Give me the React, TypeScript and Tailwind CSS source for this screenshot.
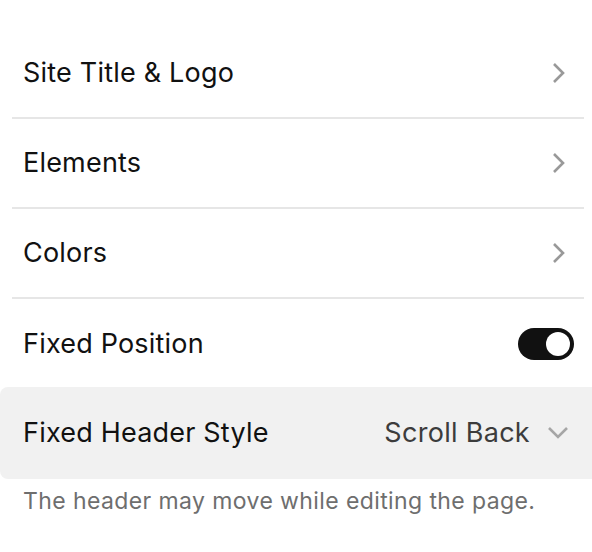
const LINKS = ['Site Title & Logo', 'Elements', 'Colors'];

function Chevron({ dir }: { dir: 'right' | 'down' }) {
  if (dir === 'right')
    return (
      <svg width="16" height="22" viewBox="0 0 16 22" className="mr-[7px] text-[#999]" fill="none" stroke="currentColor" strokeWidth="2.6">
        <path d="M3 2l9 9-9 9" />
      </svg>
    );
  return (
    <svg width="22" height="16" viewBox="0 0 22 16" className="text-[#a6a6a6]" fill="none" stroke="currentColor" strokeWidth="2.6">
      <path d="M2 3l9 9 9-9" />
    </svg>
  );
}

function Row({ label, children, divider = true }: { label: string; children?: React.ReactNode; divider?: boolean }) {
  return (
    <div className={`flex h-[90px] items-center justify-between pl-[11px] pr-[10px] ${divider ? 'border-b-2 border-[#e6e6e6]' : ''}`}>
      <span className="text-[27px] tracking-[0.2px] text-[#111]">{label}</span>
      {children}
    </div>
  );
}

export default function App() {
  return (
    <div className="min-h-[552px] w-[592px] bg-white pt-[29px]" style={{ fontFamily: 'Inter, "Liberation Sans", sans-serif' }}>
      <div className="pl-3 pr-2">
        {LINKS.map((l) => (
          <Row key={l} label={l}>
            <Chevron dir="right" />
          </Row>
        ))}
        <Row label="Fixed Position" divider={false}>
          <div className="flex h-8 w-[56px] items-center justify-end rounded-full bg-[#111] pr-1">
            <div className="h-6 w-6 rounded-full bg-white" />
          </div>
        </Row>
      </div>
      <div className="mt-[-2px] flex h-[92px] items-center justify-between rounded-l-lg bg-[#f1f1f1] pl-[23px] pr-[23px]">
        <span className="text-[27px] tracking-[0.2px] text-[#111]">Fixed Header Style</span>
        <div className="flex items-center gap-[17px]">
          <span className="text-[27px] tracking-[0.3px] text-[#3c3c3c]">Scroll Back</span>
          <Chevron dir="down" />
        </div>
      </div>
      <p className="mt-[5px] pl-[23px] text-[23px] tracking-[0.4px] text-[#6e6e6e]">The header may move while editing the page.</p>
    </div>
  );
}
